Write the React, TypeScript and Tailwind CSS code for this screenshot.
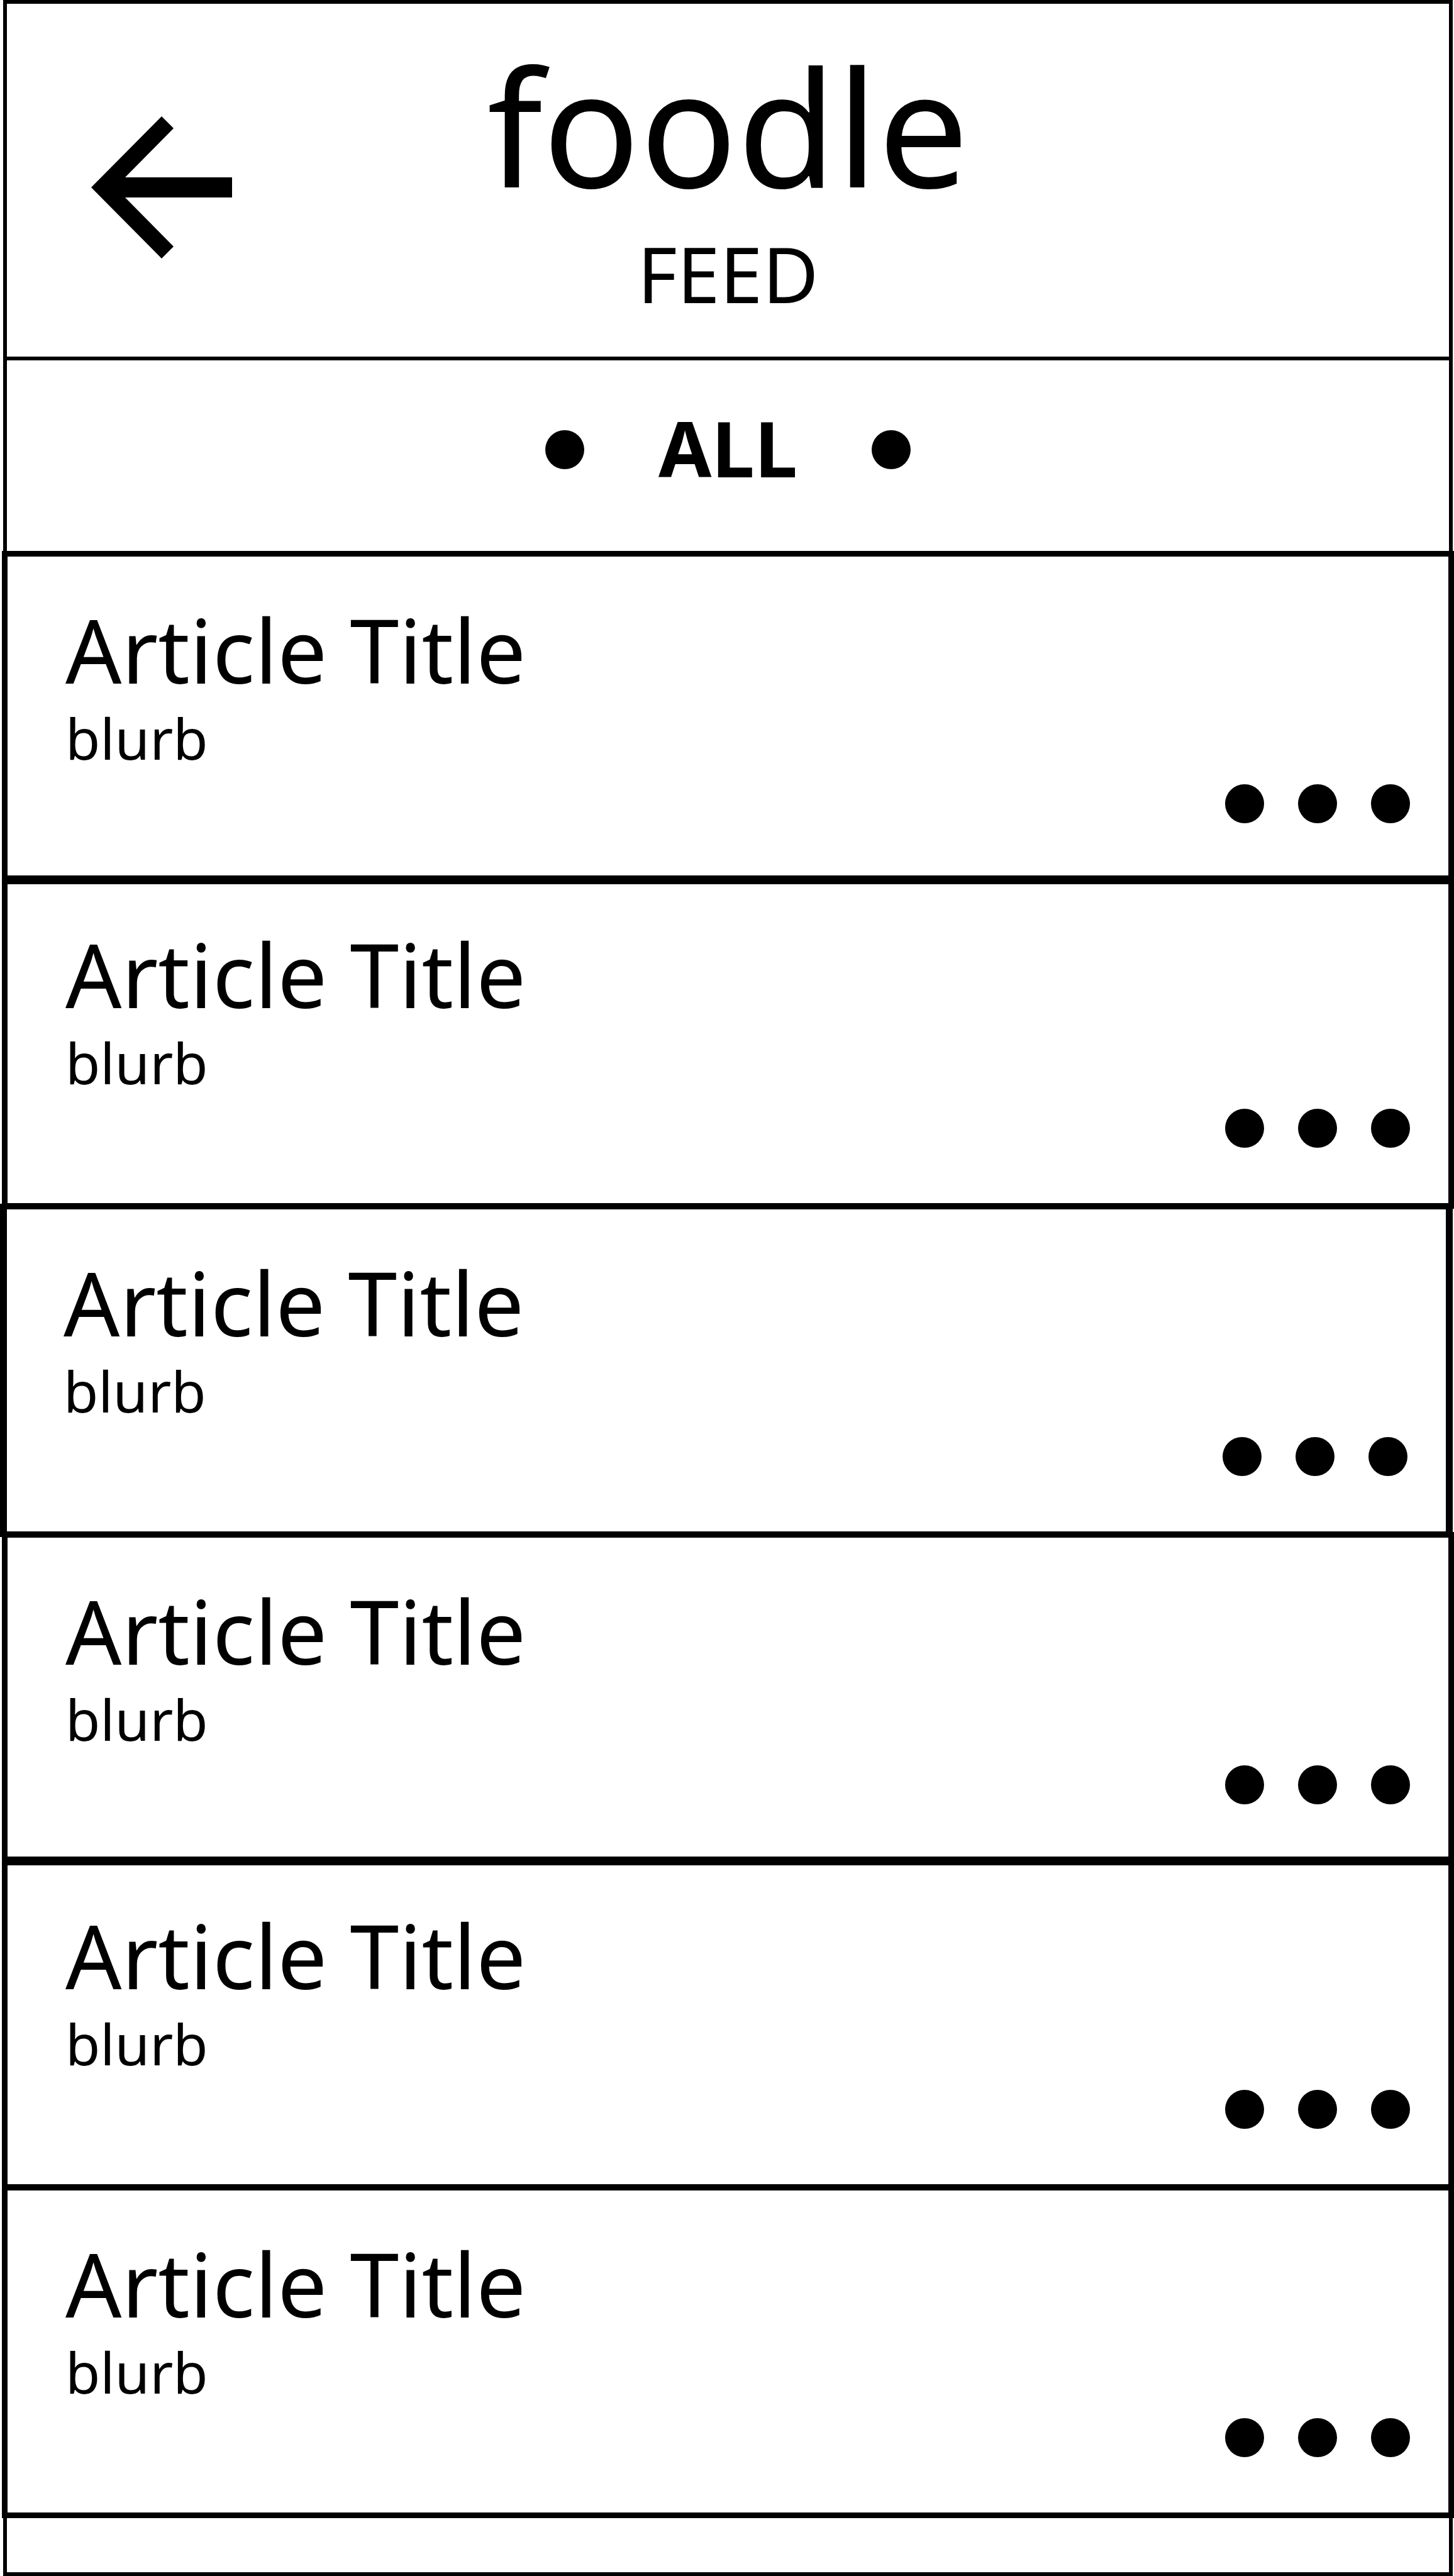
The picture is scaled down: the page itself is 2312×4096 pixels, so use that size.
const DOT = "size-[62px] rounded-full bg-black";

type Article = { id: number; title: string; blurb: string; frame: string };

const ARTICLES: Article[] = [
  { id: 1, title: "Article Title", blurb: "blurb", frame: "-mx-[8px]" },
  { id: 2, title: "Article Title", blurb: "blurb", frame: "-mx-[8px] -mt-[14px]" },
  { id: 3, title: "Article Title", blurb: "blurb", frame: "-ml-[11px] -mr-[4px] -mt-[8px]" },
  { id: 4, title: "Article Title", blurb: "blurb", frame: "-mx-[8px] -mt-[8px]" },
  { id: 5, title: "Article Title", blurb: "blurb", frame: "-mx-[8px] -mt-[14px]" },
  { id: 6, title: "Article Title", blurb: "blurb", frame: "-mx-[8px] -mt-[8px]" },
];

function BackArrow() {
  return (
    <svg viewBox="0 0 224 226" className="h-[226px] w-[224px]" fill="black" aria-hidden="true">
      <path d="M0 113 L112 0 L131 19 L54 97 H224 V129 H54 L131 207 L112 226 Z" />
    </svg>
  );
}

function ArticleCard({ article }: { article: Article }) {
  return (
    <li className={`flex h-[530px] flex-col border-[9px] border-black pt-[60px] pr-[61px] pl-[92px] ${article.frame}`}>
      <h2 className="text-[140px] leading-[176px]">{article.title}</h2>
      <p className="text-[90px] leading-[104px]">{article.blurb}</p>
      <button type="button" aria-label="More options" className="mt-[22px] flex items-center gap-[54px] self-end">
        <span className={DOT} />
        <span className={DOT} />
        <span className={DOT} />
      </button>
    </li>
  );
}

export default function App() {
  return (
    <main className="mr-[2px] ml-[5px] min-h-screen border-[6px] border-black bg-white font-['Noto_Sans','Open_Sans',sans-serif] text-black">
      <header className="grid h-[567px] grid-cols-[1fr_auto_1fr] border-b-[6px] border-black">
        <button type="button" aria-label="Back" className="mt-[179px] ml-[134px] self-start justify-self-start">
          <BackArrow />
        </button>
        <div className="text-center">
          <h1 className="pt-[43px] text-[256px] leading-[300px]">foodle</h1>
          <p className="text-[122px] leading-[172px]">FEED</p>
        </div>
      </header>
      <nav aria-label="Feed filter" className="flex h-[303px] items-center justify-center gap-[118px] pb-[20px]">
        <button type="button" aria-label="Previous filter" className={DOT} />
        <span className="pb-[6px] text-[122px] leading-[160px] font-bold">ALL</span>
        <button type="button" aria-label="Next filter" className={DOT} />
      </nav>
      <ul>
        {ARTICLES.map((article) => (
          <ArticleCard key={article.id} article={article} />
        ))}
      </ul>
    </main>
  );
}
